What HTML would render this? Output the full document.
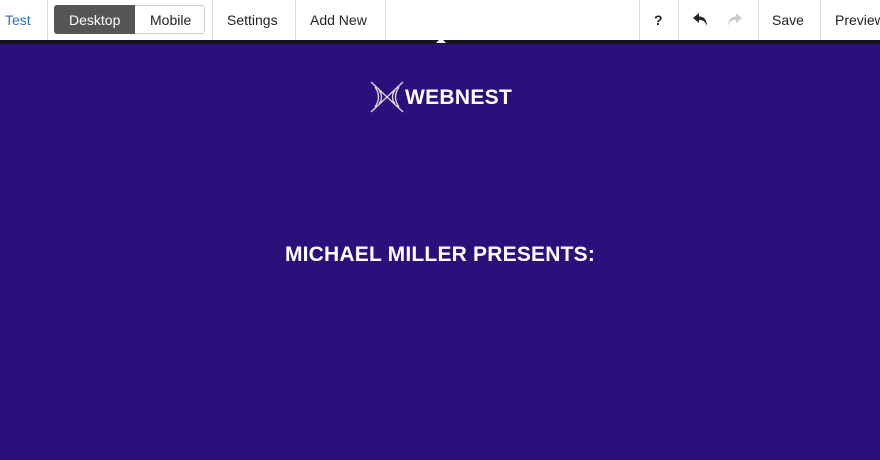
<!DOCTYPE html><html><head><style>
body{margin:0;width:880px;height:460px;overflow:hidden;background:#2c0f7b;font-family:"Liberation Sans",sans-serif}
.bar{position:absolute;top:0;left:0;width:880px;height:40px;background:#fff}
.band{position:absolute;top:40px;left:0;width:880px;height:4px;background:#15131c}
.t{position:absolute;top:12px;font-size:14px;color:#222}
.d{position:absolute;top:0;width:1px;height:40px;background:#ddd}
.car{position:absolute;left:436px;top:38px;width:0;height:0;border-left:5px solid transparent;border-right:5px solid transparent;border-bottom:5px solid #fff}
</style></head><body>
<div class="bar">
<span class="t" style="left:5px;color:#2d6bd0">Test</span>
<div class="d" style="left:47px"></div>
<div style="position:absolute;left:54px;top:5px;width:151px;height:29px;border:1px solid #ccc;border-radius:3px;box-sizing:border-box"></div>
<div style="position:absolute;left:54px;top:5px;width:81px;height:29px;background:#555;border-radius:3px 0 0 3px"></div>
<span class="t" style="left:69px;color:#fff">Desktop</span>
<span class="t" style="left:150px">Mobile</span>
<div class="d" style="left:212px"></div>
<span class="t" style="left:227px">Settings</span>
<div class="d" style="left:295px"></div>
<span class="t" style="left:310px">Add New</span>
<div class="d" style="left:385px"></div>
<div class="d" style="left:639px"></div>
<span class="t" style="left:654px;font-weight:bold">?</span>
<div class="d" style="left:678px"></div>
<svg style="position:absolute;left:692px;top:12px" width="18" height="16" viewBox="0 0 18 16"><path d="M7 1 L1 6 L7 11 V8 C11 8 13 9 15 14 C15 8 12 4.5 7 4.5Z" fill="#222"/></svg>
<svg style="position:absolute;left:725px;top:12px" width="18" height="16" viewBox="0 0 18 16"><path d="M11 1 L17 6 L11 11 V8 C7 8 5 9 3 14 C3 8 6 4.5 11 4.5Z" fill="#ccc"/></svg>
<div class="d" style="left:758px"></div>
<span class="t" style="left:772px">Save</span>
<div class="d" style="left:820px"></div>
<span class="t" style="left:835px">Preview</span>
</div>
<div class="band"></div><div class="car"></div>
<svg style="position:absolute;left:370px;top:81px" width="34" height="32" viewBox="0 0 34 32" fill="none" stroke="#ddd" stroke-width="1.3"><path d="M1 1 L17 16 L1 31 M33 1 L17 16 L33 31 M5 6 Q12 16 5 26 M9 9 Q14 16 9 23 M29 6 Q22 16 29 26 M25 9 Q20 16 25 23"/></svg>
<div style="position:absolute;left:405px;top:86px;color:#fff;font-weight:bold;font-size:21px;letter-spacing:0.3px">WEBNEST</div>
<div style="position:absolute;left:0;width:880px;top:243px;text-align:center;color:#fff;font-weight:bold;font-size:21px;letter-spacing:0.2px">MICHAEL MILLER PRESENTS:</div>
</body></html>
